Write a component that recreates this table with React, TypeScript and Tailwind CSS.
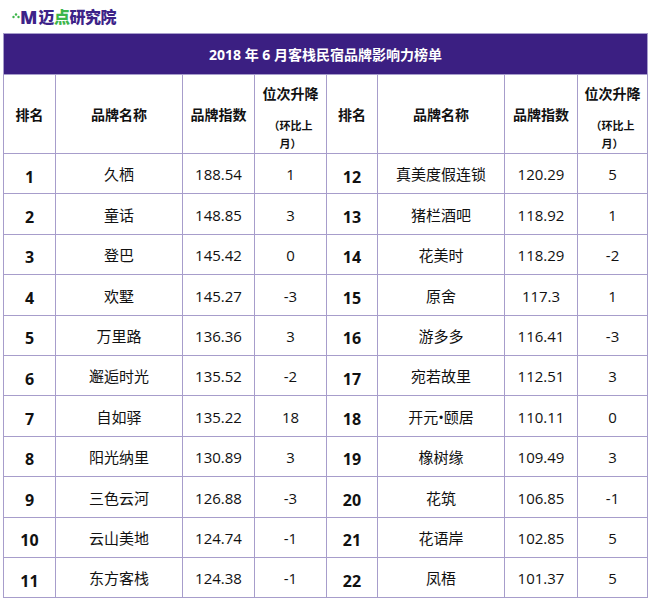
const rows: [string, string, string, string][] = [
  ["1", "久栖", "188.54", "1"],
  ["2", "童话", "148.85", "3"],
  ["3", "登巴", "145.42", "0"],
  ["4", "欢墅", "145.27", "-3"],
  ["5", "万里路", "136.36", "3"],
  ["6", "邂逅时光", "135.52", "-2"],
  ["7", "自如驿", "135.22", "18"],
  ["8", "阳光纳里", "130.89", "3"],
  ["9", "三色云河", "126.88", "-3"],
  ["10", "云山美地", "124.74", "-1"],
  ["11", "东方客栈", "124.38", "-1"],
  ["12", "真美度假连锁", "120.29", "5"],
  ["13", "猪栏酒吧", "118.92", "1"],
  ["14", "花美时", "118.29", "-2"],
  ["15", "原舍", "117.3", "1"],
  ["16", "游多多", "116.41", "-3"],
  ["17", "宛若故里", "112.51", "3"],
  ["18", "开元•颐居", "110.11", "0"],
  ["19", "橡树缘", "109.49", "3"],
  ["20", "花筑", "106.85", "-1"],
  ["21", "花语岸", "102.85", "5"],
  ["22", "凤梧", "101.37", "5"],
]

const cell = "border border-[#a79dcb] text-center align-middle p-0"

function HeadCells() {
  return (
    <>
      <th className={`${cell} text-[14px] font-bold`}>排名</th>
      <th className={`${cell} text-[14px] font-bold`}>品牌名称</th>
      <th className={`${cell} text-[14px] font-bold`}>品牌指数</th>
      <th className={`${cell} font-bold pt-[8px]`}>
        <div className="text-[14px] leading-[20px] whitespace-nowrap mb-[13px]">位次升降</div>
        <div className="text-[11px] leading-[18px]">
          （环比上
          <br />
          月）
        </div>
      </th>
    </>
  )
}

function DataCells({ r }: { r: [string, string, string, string] }) {
  return (
    <>
      <td className={`${cell} text-[16px] font-bold pt-[6px]`}>{r[0]}</td>
      <td className={`${cell} text-[15px] pt-[2px]`}>{r[1]}</td>
      <td className={`${cell} text-[15px] pt-[2px]`}>{r[2]}</td>
      <td className={`${cell} text-[15px] pt-[2px]`}>{r[3]}</td>
    </>
  )
}

export default function App() {
  const left = rows.slice(0, 11)
  const right = rows.slice(11)
  return (
    <div
      className="w-[650px] h-[600px] bg-white text-[#111] overflow-hidden"
      style={{ fontFamily: '"Open Sans", "Noto Sans CJK SC", sans-serif' }}
    >
      {/* logo */}
      <div className="h-[33px] pl-[12px] flex items-center gap-[2px]">
        <div className="flex items-end">
          <svg width="8" height="8" viewBox="0 0 8 8" className="mb-[6px]">
            <circle cx="1.5" cy="5" r="1.2" fill="#3cb54a" />
            <circle cx="4" cy="2.5" r="1.2" fill="#3cb54a" />
            <circle cx="6.5" cy="5" r="1.2" fill="#3cb54a" />
          </svg>
          <span className="text-[18px] leading-none font-black text-[#3d2388] tracking-[-1px]">M</span>
        </div>
        <span className="text-[16px] leading-none font-black text-[#3d2388] tracking-[-0.5px]">
          迈<span className="text-[#3cb54a]">点</span>研究院
        </span>
      </div>

      <table className="ml-[3px] w-[644px] table-fixed border-collapse">
        <colgroup>
          <col className="w-[52px]" />
          <col className="w-[127px]" />
          <col className="w-[72px]" />
          <col className="w-[72px]" />
          <col className="w-[51px]" />
          <col className="w-[127px]" />
          <col className="w-[73px]" />
          <col className="w-[70px]" />
        </colgroup>
        <thead>
          <tr className="h-[41px]">
            <th
              colSpan={8}
              className="bg-[#3b1f82] border border-[#a79dcb] text-white text-[14px] font-bold text-center p-0"
            >
              2018 年 6 月客栈民宿品牌影响力榜单
            </th>
          </tr>
          <tr className="h-[79px]">
            <HeadCells />
            <HeadCells />
          </tr>
        </thead>
        <tbody>
          {left.map((r, i) => (
            <tr key={r[0]} className="h-[40.4px]">
              <DataCells r={r} />
              {right[i] && <DataCells r={right[i]} />}
            </tr>
          ))}
        </tbody>
      </table>
    </div>
  )
}
